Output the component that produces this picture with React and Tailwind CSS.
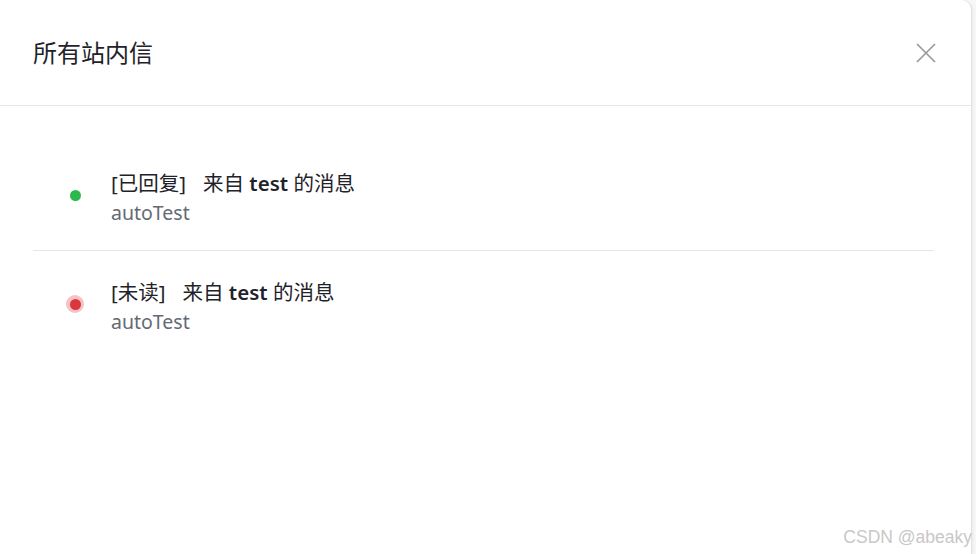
const messages = [
  { id: 1, status: "已回复", from: "test", sender: "autoTest", unread: false },
  { id: 2, status: "未读", from: "test", sender: "autoTest", unread: true },
];

function StatusDot({ unread }) {
  if (unread) {
    return (
      <span className="flex h-[18px] w-[18px] items-center justify-center rounded-full bg-[#f5c2c4]">
        <span className="h-[11px] w-[11px] rounded-full bg-[#d9363e]" />
      </span>
    );
  }
  return (
    <span className="flex h-[18px] w-[18px] items-center justify-center">
      <span className="h-[11px] w-[11px] rounded-full bg-[#2db84d]" />
    </span>
  );
}

export default function App() {
  return (
    <div
      className="relative h-[554px] w-full overflow-hidden bg-[#f7f7f7]"
      style={{ fontFamily: '"Noto Sans", "Noto Sans CJK SC", sans-serif' }}
    >
      <div className="h-full w-[972px] rounded-tr-[10px] border-r border-[#e3e3e3] bg-white shadow-[1px_0_3px_rgba(0,0,0,0.06)]">
        {/* Header */}
        <div className="flex h-[106px] items-center justify-between border-b border-[#e5e6eb] pl-[33px] pr-[35px]">
          <h2 className="text-[24px] leading-none font-normal text-[#1f2329]">所有站内信</h2>
          <button className="text-[#9a9a9a]">
            <svg width="20" height="20" viewBox="0 0 20 20" fill="none" stroke="currentColor" strokeWidth="1.7">
              <line x1="1" y1="1" x2="19" y2="19" />
              <line x1="19" y1="1" x2="1" y2="19" />
            </svg>
          </button>
        </div>

        {/* List */}
        <div className="pt-[38px] pl-[33px] pr-[37px]">
          {messages.map((m, i) => (
            <div
              key={m.id}
              className={
                i === 0
                  ? "flex items-start border-b border-[#e5e6eb] pt-[24px] pb-[22px]"
                  : "flex items-start pt-[26px] pb-[22px]"
              }
            >
              <div className="mt-[18px] flex w-[78px] justify-center pl-[6px]">
                <StatusDot unread={m.unread} />
              </div>
              <div className="flex flex-col">
                <p className="text-[20.5px] leading-[30px] text-[#1f2329]">
                  <span>[{m.status}]</span>
                  <span className="ml-[17px]">来自 </span>
                  <span className="font-semibold">{m.from}</span>
                  <span> 的消息</span>
                </p>
                <p className="text-[19.5px] leading-[30px] text-[#646a73]">{m.sender}</p>
              </div>
            </div>
          ))}
        </div>
      </div>

      <span
        className="absolute right-[4px] bottom-[8px] text-[17.5px] leading-none text-[#c8c8c8]"
        style={{ fontFamily: '"Liberation Sans", Arial, sans-serif' }}
      >
        CSDN @abeaky
      </span>
    </div>
  );
}
